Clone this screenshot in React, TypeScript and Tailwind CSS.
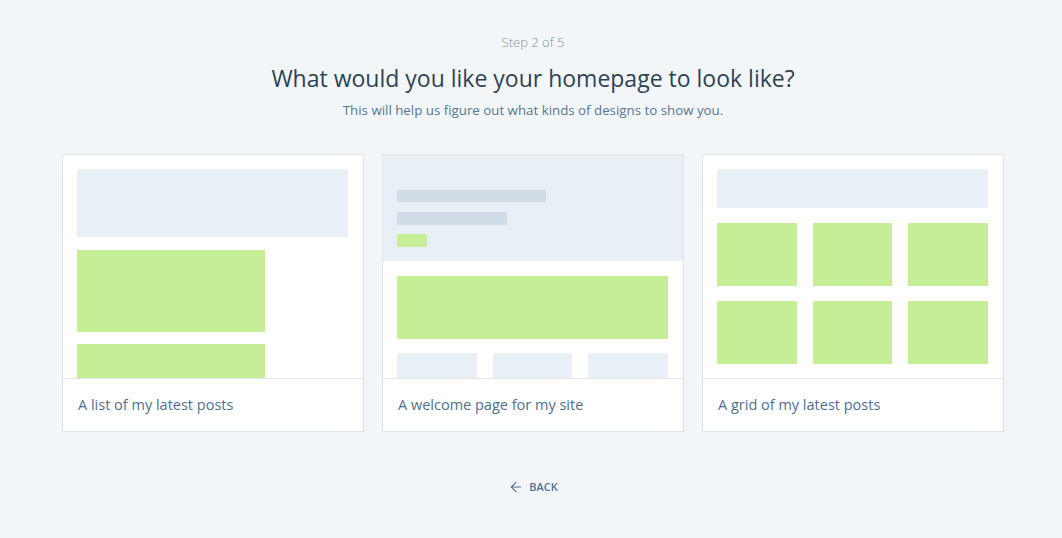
import { ArrowLeft } from "lucide-react";

const green = "bg-[#c5ef96]";
const light = "bg-[#e8eff5]";

function ListPreview() {
  return (
    <div className="h-[223px] overflow-hidden bg-white pt-[14px] pl-[14px] pr-[15px]">
      <div className={`h-[68px] ${light}`} />
      <div className={`mt-[13px] h-[82px] w-[188px] ${green}`} />
      <div className={`mt-[12px] h-[82px] w-[188px] ${green}`} />
    </div>
  );
}

function WelcomePreview() {
  return (
    <div className="h-[223px] overflow-hidden bg-white">
      <div className={`h-[106px] ${light} pl-[14px] pr-[15px] pt-[35px]`}>
        <div className="h-[12px] w-[149px] bg-[#d1dde6]" />
        <div className="mt-[10px] h-[13px] w-[110px] bg-[#d1dde6]" />
        <div className={`mt-[9px] h-[13px] w-[30px] ${green}`} />
      </div>
      <div className="pl-[14px] pr-[15px] pt-[15px]">
        <div className={`h-[63px] ${green}`} />
        <div className="mt-[14px] grid grid-cols-3 gap-[16px]">
          <div className={`h-[40px] ${light}`} />
          <div className={`h-[40px] ${light}`} />
          <div className={`h-[40px] ${light}`} />
        </div>
      </div>
    </div>
  );
}

function GridPreview() {
  return (
    <div className="h-[223px] overflow-hidden bg-white pt-[14px] pl-[14px] pr-[15px]">
      <div className={`h-[39px] ${light}`} />
      <div className="mt-[15px] grid grid-cols-3 gap-x-[16px] gap-y-[15px]">
        {[0, 1, 2, 3, 4, 5].map((i) => (
          <div key={i} className={`h-[63px] ${green}`} />
        ))}
      </div>
    </div>
  );
}

const cards = [
  { label: "A list of my latest posts", preview: <ListPreview /> },
  { label: "A welcome page for my site", preview: <WelcomePreview /> },
  { label: "A grid of my latest posts", preview: <GridPreview /> },
];

export default function App() {
  return (
    <div
      className="min-h-[538px] w-full bg-[#f3f6f8] pl-[4px]"
      style={{ fontFamily: '"Open Sans", "Noto Sans", sans-serif' }}
    >
      <div className="flex flex-col items-center">
        <div className="mt-[33px] text-[13px] font-light leading-[18px] text-[#7d8e9e]">Step 2 of 5</div>
        <h1 className="mt-[11px] text-[23px] leading-[32px] text-[#2e4453]">
          What would you like your homepage to look like?
        </h1>
        <p className="mt-[6px] text-[13.3px] leading-[20px] text-[#537994]">
          This will help us figure out what kinds of designs to show you.
        </p>

        <div className="mt-[34px] grid w-[942px] grid-cols-3 gap-[18px]">
          {cards.map((c) => (
            <button
              key={c.label}
              className="flex cursor-pointer flex-col border border-[#dde5ec] bg-white text-left"
            >
              <div className="w-full">{c.preview}</div>
              <div className="flex h-[53px] w-full items-center border-t border-[#dde5ec] px-[15px] text-[14.5px] text-[#4f6f8f]">
                {c.label}
              </div>
            </button>
          ))}
        </div>

        <button className="mt-[47px] flex items-center gap-[5px] text-[11px] font-semibold text-[#4f7196]">
          <ArrowLeft size={16} strokeWidth={1.6} />
          BACK
        </button>
      </div>
    </div>
  );
}
